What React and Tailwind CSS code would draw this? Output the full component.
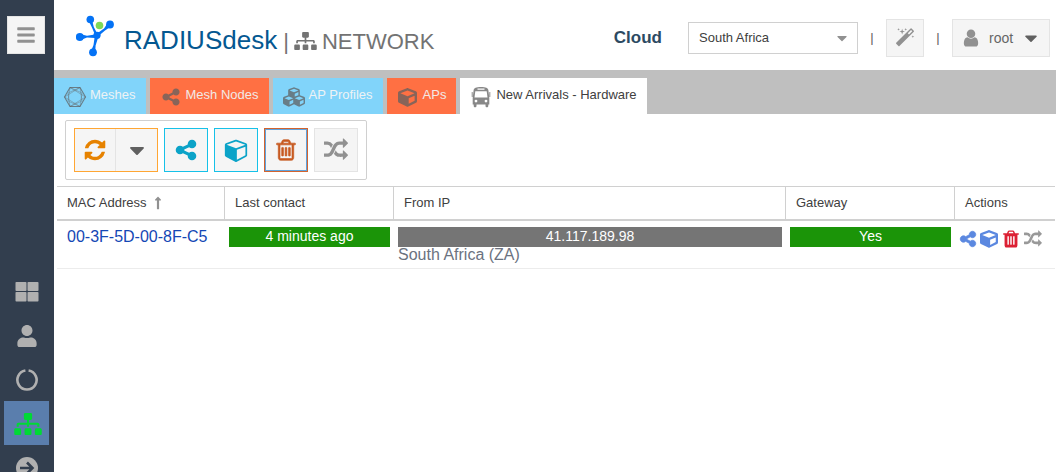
import React, { useState } from 'react';
import { FaBars, FaCaretDown, FaCube, FaCubes, FaLongArrowAltUp, FaSitemap, FaUser } from 'react-icons/fa';

const PATHS = {
  share:
    'M1344 1024q133 0 226.5 93.5t93.5 226.5-93.5 226.5-226.5 93.5-226.5-93.5-93.5-226.5q0-12 2-34l-360-180q-92 86-218 86-133 0-226.5-93.5t-93.5-226.5 93.5-226.5 226.5-93.5q126 0 218 86l360-180q-2-22-2-34 0-133 93.5-226.5t226.5-93.5 226.5 93.5 93.5 226.5-93.5 226.5-226.5 93.5q-126 0-218-86l-360 180q2 22 2 34t-2 34l360 180q92-86 218-86z',
  cube:
    'M896 1629l640-349v-636l-640 233v752zm-64-865l698-254-698-254-698 254zm832-252v768q0 35-18 65t-49 47l-704 384q-28 16-61 16t-61-16l-704-384q-31-17-49-47t-18-65v-768q0-40 23-73t61-47l704-256q22-8 44-8t44 8l704 256q38 14 61 47t23 73z',
  refresh:
    'M1639 1056q0 5-1 7-64 268-268 434.5t-478 166.5q-146 0-282.5-55t-243.5-157l-129 129q-19 19-45 19t-45-19-19-45v-448q0-26 19-45t45-19h448q26 0 45 19t19 45-19 45l-137 137q71 66 161 102t187 36q134 0 250-65t186-179q11-17 53-117 8-23 30-23h192q13 0 22.5 9.5t9.5 22.5zm25-800v448q0 26-19 45t-45 19h-448q-26 0-45-19t-19-45 19-45l138-138q-148-137-349-137-134 0-250 65t-186 179q-11 17-53 117-8 23-30 23h-199q-13 0-22.5-9.5t-9.5-22.5v-7q65-268 270-434.5t480-166.5q146 0 284 55.5t245 156.5l130-129q19-19 45-19t45 19 19 45z',
  trash:
    'M704 1376v-704q0-14-9-23t-23-9h-64q-14 0-23 9t-9 23v704q0 14 9 23t23 9h64q14 0 23-9t9-23zm256 0v-704q0-14-9-23t-23-9h-64q-14 0-23 9t-9 23v704q0 14 9 23t23 9h64q14 0 23-9t9-23zm256 0v-704q0-14-9-23t-23-9h-64q-14 0-23 9t-9 23v704q0 14 9 23t23 9h64q14 0 23-9t9-23zm-544-992h448l-48-117q-7-9-17-11h-317q-10 2-17 11zm928 32v64q0 14-9 23t-23 9h-96v948q0 83-47 143.5t-113 60.5h-832q-66 0-113-58.5t-47-141.5v-952h-96q-14 0-23-9t-9-23v-64q0-14 9-23t23-9h309l70-167q15-37 54-63t79-26h320q40 0 79 26t54 63l70 167h309q14 0 23 9t9 23z',
  trashOutline:
    'M704 736v576q0 14-9 23t-23 9h-64q-14 0-23-9t-9-23v-576q0-14 9-23t23-9h64q14 0 23 9t9 23zm256 0v576q0 14-9 23t-23 9h-64q-14 0-23-9t-9-23v-576q0-14 9-23t23-9h64q14 0 23 9t9 23zm256 0v576q0 14-9 23t-23 9h-64q-14 0-23-9t-9-23v-576q0-14 9-23t23-9h64q14 0 23 9t9 23zm128 724v-948h-896v948q0 22 7 40.5t14.5 27 10.5 8.5h832q3 0 10.5-8.5t14.5-27 7-40.5zm-672-1076h448l-48-117q-7-9-17-11h-317q-10 2-17 11zm928 32v64q0 14-9 23t-23 9h-96v948q0 83-47 143.5t-113 60.5h-832q-66 0-113-58.5t-47-141.5v-952h-96q-14 0-23-9t-9-23v-64q0-14 9-23t23-9h309l70-167q15-37 54-63t79-26h320q40 0 79 26t54 63l70 167h309q14 0 23 9t9 23z',
  random:
    'M666 481q-60 92-137 273-22-45-37-72.5t-40.5-63.5-51-56.5-63-35-81.5-14.5h-224q-14 0-23-9t-9-23v-192q0-14 9-23t23-9h224q250 0 410 225zm1126 799q0 14-9 23l-320 320q-9 9-23 9-13 0-22.5-9.5t-9.5-22.5v-192q-32 0-85 .5t-81 1-73-1-71-5-64-10.5-63-18.5-58-28.5-59-40-55-53.5-56-69.5q59-93 136-273 22 45 37 72.5t40.5 63.5 51 56.5 63 35 81.5 14.5h256v-192q0-14 9-23t23-9q12 0 24 10l319 319q9 9 9 23zm0-896q0 14-9 23l-320 320q-9 9-23 9-13 0-22.5-9.5t-9.5-22.5v-192h-256q-48 0-87 15t-69 45-51 61.5-45 77.5q-32 62-78 171-29 66-49.5 111t-54 105-64 100-74 83-90 68.5-106.5 42-128 16.5h-224q-14 0-23-9t-9-23v-192q0-14 9-23t23-9h224q48 0 87-15t69-45 51-61.5 45-77.5q32-62 78-171 29-66 49.5-111t54-105 64-100 74-83 90-68.5 106.5-42 128-16.5h256v-192q0-14 9-23t23-9q12 0 24 10l319 319q9 9 9 23z',
  magic:
    'M1254 581l293-293-107-107-293 293zm447-293q0 27-18 45l-1286 1286q-18 18-45 18t-45-18l-198-198q-18-18-18-45t18-45l1286-1286q18-18 45-18t45 18l198 198q18 18 18 45zm-1351-190l98 30-98 30-30 98-30-98-98-30 98-30 30-98zm350 162l196 60-196 60-60 196-60-196-196-60 196-60 60-196zm930 478l98 30-98 30-30 98-30-98-98-30 98-30 30-98zm-640-640l98 30-98 30-30 98-30-98-98-30 98-30 30-98z',
  user:
    'M1536 1399q0 109-62.5 187t-150.5 78h-854q-88 0-150.5-78t-62.5-187q0-85 8.5-160.5t31.5-152 58.5-131 94-89 134.5-34.5q131 128 313 128t313-128q76 0 134.5 34.5t94 89 58.5 131 31.5 152 8.5 160.5zm-256-887q0 159-112.5 271.5t-271.5 112.5-271.5-112.5-112.5-271.5 112.5-271.5 271.5-112.5 271.5 112.5 112.5 271.5z',
};

const Icon = ({ name, className }) => (
  <svg viewBox={name === 'cube' ? '-64 0 1792 1792' : '0 0 1792 1792'} fill="currentColor" className={className}>
    <path d={PATHS[name]} />
  </svg>
);

const Logo = () => (
  <svg viewBox="0 0 40 42" className="w-10 h-[42px]">
    <g fill="#0472f5">
      <circle cx="14.300" cy="4.500" r="3.800" />
      <circle cx="34" cy="9.500" r="3.900" />
      <circle cx="3.800" cy="22" r="3.900" />
      <circle cx="17" cy="37.300" r="3.900" />
      <circle cx="21" cy="20.300" r="3.600" />
      <path d="M13 6.500l3.500.5L17.800 12l3.400 6.500-2.200 1.500-2.800-7zM31 9l2.500 3.500-4.500 3L22.500 21l-1.500-2.500 7-5zM6 19.600l5 1.200 8-1.300v3.600l-8-.6-5 1.900zM15.500 35l2-5 1.300-9h3.800l-3 9.500L19.300 36z" />
    </g>
    <circle cx="23.500" cy="10.500" r="3.800" fill="#7ed957" />
  </svg>
);

const MeshIcon = ({ className }) => (
  <svg viewBox="0 0 24 22" fill="none" stroke="currentColor" className={className}>
    <path d="M1.500 11l5.500-9.500h10L22.500 11 17 20.500H7z" strokeWidth="1.100" />
    <path
      d="M7 1.500L19 7l-2 13.500L5 15zM17 1.500L5 7l2 13.500L19 15zM1.500 11L17 1.500M22.500 11L7 1.500M1.500 11L17 20.500M22.500 11L7 20.500"
      strokeWidth="0.500"
    />
  </svg>
);

const BusIcon = ({ className }) => (
  <svg viewBox="0 0 20 22" fill="currentColor" className={className}>
    <path
      fillRule="evenodd"
      d="M10 1c5 0 7 1.200 7.400 3.200L18.300 12v6.500h-1v1.300c0 1-.6 1.500-1.400 1.500s-1.400-.5-1.400-1.500v-1.300h-9v1.300c0 1-.6 1.500-1.400 1.500s-1.400-.5-1.400-1.500v-1.300h-1V12l.9-7.800C3 2.200 5 1 10 1zM6.500 2.600v1.200h7V2.600zM4.300 5.300l-.8 6.200h13l-.8-6.200zM5 13.700a1.400 1.400 0 100 2.800 1.400 1.400 0 000-2.800zM15 13.700a1.400 1.400 0 100 2.800 1.400 1.400 0 000-2.800z"
    />
    <rect x="0.700" y="6" width="1" height="5" rx="0.500" />
    <rect x="18.300" y="6" width="1" height="5" rx="0.500" />
  </svg>
);

const GridIcon = () => (
  <svg viewBox="0 0 24 20" fill="currentColor" className="w-6 h-5">
    <rect x="0.500" y="0" width="11" height="9" rx="0.800" />
    <rect x="12.500" y="0" width="11" height="9" rx="0.800" />
    <rect x="0.500" y="10" width="11" height="9.500" rx="0.800" />
    <rect x="12.500" y="10" width="11" height="9.500" rx="0.800" />
  </svg>
);

const NotchIcon = () => (
  <svg viewBox="0 0 22 22" fill="none" stroke="currentColor" strokeWidth="2.600" className="w-[22px] h-[22px]">
    <path d="M12.600 1.500a9.600 9.600 0 11-3.200 0" />
  </svg>
);

const ArrowIcon = () => (
  <svg viewBox="0 0 22 22" className="w-[22px] h-[22px]">
    <circle cx="11" cy="11" r="11" fill="currentColor" />
    <path d="M4 11h12M11 5.500l5.500 5.500-5.500 5.500" fill="none" stroke="#323e4e" strokeWidth="2.600" />
  </svg>
);

const navItems = [
  { label: 'Dashboard', icon: <GridIcon /> },
  { label: 'Users', icon: <FaUser className="w-5 h-[22px]" /> },
  { label: 'RADIUS', icon: <NotchIcon /> },
  { label: 'Network', icon: <FaSitemap className="w-7 h-[22px]" />, active: true },
  { label: 'Other', icon: <ArrowIcon /> },
];

const tabs = [
  { label: 'Meshes', icon: <MeshIcon className="w-6 h-[22px]" />, color: 'bg-[#81d4fa] text-[#eef3f5]' },
  { label: 'Mesh Nodes', icon: <Icon name="share" className="w-5 h-5" />, color: 'bg-[#ff7043] text-[#f2e9e6]' },
  { label: 'AP Profiles', icon: <FaCubes className="w-6 h-[22px]" />, color: 'bg-[#81d4fa] text-[#eef3f5]' },
  { label: 'APs', icon: <FaCube className="w-[19px] h-[19px]" />, color: 'bg-[#ff7043] text-[#f2e9e6]' },
  { label: 'New Arrivals - Hardware', icon: <BusIcon className="w-5 h-[22px]" />, color: 'bg-white text-[#404040]' },
];

const columns = ['MAC Address', 'Last contact', 'From IP', 'Gateway', 'Actions'];

const Sidebar = () => (
  <aside className="w-[54px] shrink-0 bg-[#323e4e] pt-4 overflow-hidden">
    <button
      aria-label="Toggle menu"
      className="ml-[7px] w-[38px] h-[38px] flex items-center justify-center bg-[#f5f5f5] border border-[#e4e4e4] text-[#919191]"
    >
      <FaBars className="w-5 h-5" />
    </button>
    <nav className="mt-[215px] pl-1 pr-[5px]">
      {navItems.map((item) => (
        <button
          key={item.label}
          aria-label={item.label}
          className={`w-full h-11 pt-[2px] flex items-center justify-center ${
            item.active ? 'bg-[#5a7ead] text-[#00d936] pl-[3px]' : 'text-[#b0b0b0]'
          }`}
        >
          {item.icon}
        </button>
      ))}
    </nav>
  </aside>
);

const Header = () => {
  const [cloud, setCloud] = useState('South Africa');

  return (
    <header className="h-[70px] flex items-start justify-between pl-[22px] pr-[6px] bg-white">
      <div className="flex items-start pt-[15px]">
        <Logo />
        <h1 className="ml-2 mt-[9px] flex items-baseline text-[22px] leading-8 text-[#737373]">
          <span className="text-[26px] text-[#045891]">RADIUSdesk</span>
          <span className="ml-[6px]">|</span>
          <FaSitemap className="ml-[5px] mr-[5px] w-[23px] h-[18px] self-center" />
          <span>NETWORK</span>
        </h1>
      </div>
      <div className="mt-[19px] h-[38px] flex items-center text-[13px] text-[#606060]">
        <label htmlFor="cloud" className="mr-[26px] text-[17px] leading-5 font-bold text-[#2c4a62]">
          Cloud
        </label>
        <div className="relative">
          <select
            id="cloud"
            value={cloud}
            onChange={(e) => setCloud(e.target.value)}
            className="w-[170px] h-8 pl-[10px] appearance-none border border-[#d0d0d0] bg-white text-[#404040]"
          >
            <option>South Africa</option>
          </select>
          <FaCaretDown className="absolute right-2 top-2 w-4 h-4 text-[#919191] pointer-events-none" />
        </div>
        <span className="w-7 text-center">|</span>
        <button
          aria-label="Setup wizard"
          className="w-[38px] h-[38px] flex items-center justify-center border border-[#e4e4e4] bg-[#f5f5f5] text-[#919191]"
        >
          <Icon name="magic" className="w-5 h-5" />
        </button>
        <span className="w-7 text-center">|</span>
        <button className="w-[98px] h-[38px] flex items-center border border-[#e4e4e4] bg-[#f5f5f5] text-sm text-[#666666]">
          <Icon name="user" className="ml-2 w-5 h-5 text-[#919191]" />
          <span className="ml-2">root</span>
          <FaCaretDown className="ml-2 w-5 h-5 text-[#606060]" />
        </button>
      </div>
    </header>
  );
};

const Tabs = () => (
  <div role="tablist" className="h-11 pt-2 flex gap-1 bg-[#bfbfbf]">
    {tabs.map((tab) => (
      <button
        key={tab.label}
        role="tab"
        aria-selected={tab.label === 'New Arrivals - Hardware'}
        className={`h-9 px-[10px] pt-2 flex items-start gap-1 text-[13px] leading-[18px] whitespace-nowrap ${tab.color}`}
      >
        <span className="w-[22px] h-[22px] flex items-center justify-center text-[#606060]/75 [&>svg]:shrink-0">
          {tab.icon}
        </span>
        {tab.label}
      </button>
    ))}
  </div>
);

const Toolbar = () => (
  <div className="ml-[11px] mt-[6px] w-fit flex gap-[6px] px-2 py-[7px] border border-[#d0d0d0] rounded-[2px]">
    <div className="flex w-[84px] h-11 border border-[#ffa633] bg-[#f5f5f5]">
      <button aria-label="Reload" className="w-[41px] flex items-center justify-center border-r border-[#e4e4e4] text-[#e68200]">
        <Icon name="refresh" className="w-6 h-6" />
      </button>
      <button aria-label="Reload options" className="flex-1 flex items-center justify-center text-[#606060]">
        <FaCaretDown className="w-6 h-6" />
      </button>
    </div>
    <button aria-label="Attach to mesh" className="w-11 h-11 flex items-center justify-center border border-[#16c1e8] bg-[#f5f5f5] text-[#0ba3c8]">
      <Icon name="share" className="w-6 h-6" />
    </button>
    <button aria-label="Attach to AP" className="w-11 h-11 flex items-center justify-center border border-[#16c1e8] bg-[#f5f5f5] text-[#0ba3c8]">
      <Icon name="cube" className="w-6 h-6" />
    </button>
    <button
      aria-label="Delete"
      className="w-11 h-11 flex items-center justify-center border border-[#d2642f] bg-[#f5f5f5] text-[#c85a21] shadow-[inset_0_0_0_1px_#5fa2dd]"
    >
      <Icon name="trashOutline" className="w-6 h-6 stroke-current stroke-[50]" />
    </button>
    <button aria-label="Redirect" className="w-11 h-11 flex items-center justify-center border border-[#e4e4e4] bg-[#f5f5f5] text-[#919191]">
      <Icon name="random" className="w-6 h-6" />
    </button>
  </div>
);

const DeviceTable = () => (
  <div className="ml-[3px] mr-px mt-[6px]">
    <table className="w-full table-fixed border-separate border-spacing-0">
      <colgroup>
        <col className="w-[168px]" />
        <col className="w-[169px]" />
        <col />
        <col className="w-[169px]" />
        <col className="w-[100px]" />
      </colgroup>
      <thead>
        <tr>
          {columns.map((name) => (
            <th
              key={name}
              className="h-[35px] px-[10px] pb-px text-left text-[13px] leading-4 font-normal text-[#404040] border-t border-b-2 border-r border-[#d0d0d0] last:border-r-0"
            >
              <span className="flex items-center gap-1">
                {name}
                {name === 'MAC Address' && <FaLongArrowAltUp className="w-4 h-[14px] text-[#919191]" />}
              </span>
            </th>
          ))}
        </tr>
      </thead>
      <tbody>
        <tr className="align-top text-base leading-4 text-[#6b7280] [&>td]:pt-[6px] [&>td]:h-12 [&>td]:border-b [&>td]:border-[#ececec]">
          <td className="px-[10px] leading-5 text-[#1447b5] whitespace-nowrap">00-3F-5D-00-8F-C5</td>
          <td className="px-1">
            <div className="bg-[#1b9408] text-white text-center text-sm leading-[18px] pb-[2px]">4 minutes ago</div>
          </td>
          <td className="px-1">
            <div className="bg-[#757575] text-white text-center text-sm leading-[18px] pb-[2px]">41.117.189.98</div>
            <div>South Africa (ZA)</div>
          </td>
          <td className="px-1">
            <div className="bg-[#1b9408] text-white text-center text-sm leading-[18px] pb-[2px]">Yes</div>
          </td>
          <td className="pl-1">
            <div className="flex items-center gap-[3px] pt-[2px]">
              <button aria-label="Attach to mesh" className="text-[#5b88e0]">
                <Icon name="share" className="w-[18px] h-[18px] stroke-current stroke-[80]" />
              </button>
              <button aria-label="Attach to AP" className="text-[#5b88e0]">
                <FaCube className="w-[18px] h-[18px]" />
              </button>
              <button aria-label="Delete" className="text-[#dc2034]">
                <Icon name="trash" className="w-5 h-5" />
              </button>
              <button aria-label="Redirect" className="text-[#999999]">
                <Icon name="random" className="w-[18px] h-[18px]" />
              </button>
            </div>
          </td>
        </tr>
      </tbody>
    </table>
  </div>
);

const App = () => {
  return (
    <div className="h-screen flex overflow-hidden bg-white font-['Liberation_Sans',Arial,sans-serif]">
      <Sidebar />
      <main className="flex-1 min-w-0">
        <Header />
        <Tabs />
        <Toolbar />
        <DeviceTable />
      </main>
    </div>
  );
};

export default App;
